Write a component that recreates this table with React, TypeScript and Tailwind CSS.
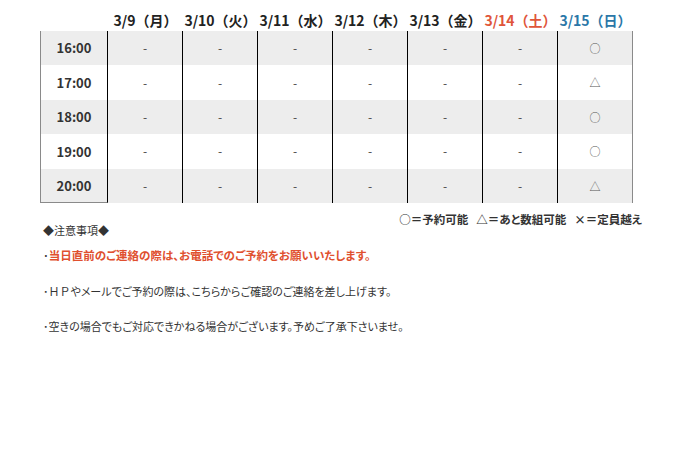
const days = [
  { label: "3/9（月）", color: "text-[#222]" },
  { label: "3/10（火）", color: "text-[#222]" },
  { label: "3/11（水）", color: "text-[#222]" },
  { label: "3/12（木）", color: "text-[#222]" },
  { label: "3/13（金）", color: "text-[#222]" },
  { label: "3/14（土）", color: "text-[#e0553a]" },
  { label: "3/15（日）", color: "text-[#2b77a8]" },
];

const rows = [
  { time: "16:00", last: "○" },
  { time: "17:00", last: "△" },
  { time: "18:00", last: "○" },
  { time: "19:00", last: "○" },
  { time: "20:00", last: "△" },
];

export default function App() {
  return (
    <div className="min-h-[454px] w-[697px] bg-white pt-[9px] font-['Noto_Sans_CJK_JP','Noto_Sans',sans-serif] text-[#333]">
      <div className="ml-[40px] w-[602px]">
        {/* header */}
        <div className="grid grid-cols-[68px_repeat(7,75px)] h-[22px]">
          <div />
          {days.map((d) => (
            <div key={d.label} className={`text-center text-[14px] font-bold leading-[22px] whitespace-nowrap ${d.color}`}>
              {d.label}
            </div>
          ))}
        </div>

        {/* schedule */}
        <div className="grid grid-cols-[68px_repeat(7,75px)]">
          {rows.map((r, i) => {
            const bg = i % 2 === 0 ? "bg-[#ededed]" : "bg-white";
            const isLast = i === rows.length - 1;
            return (
              <div key={r.time} className="contents">
                <div
                  className={`${bg} h-[34.4px] flex items-center justify-center border-l border-l-[#8a8a8a] border-r border-r-black text-[13px] font-bold text-[#333] ${isLast ? "border-b border-b-[#8a8a8a]" : ""}`}
                >
                  {r.time}
                </div>
                {days.map((d, j) => (
                  <div
                    key={d.label}
                    className={`${bg} h-[34.4px] flex items-center justify-center border-r ${j === 6 ? "border-r-[#8a8a8a]" : "border-r-black"} ${j === 6 ? "text-[11px] text-[#555]" : "text-[12px] text-[#444]"}`}
                  >
                    {j === 6 ? r.last : "-"}
                  </div>
                ))}
              </div>
            );
          })}
        </div>

        {/* legend */}
        <div className="mt-[8px] flex justify-end gap-[8px] text-[11.5px] font-bold leading-[16px] text-[#333] [font-feature-settings:'palt']">
          <span>○＝予約可能</span>
          <span>△＝あと数組可能</span>
          <span>×＝定員越え</span>
        </div>

        {/* notes */}
        <div className="text-[11px] leading-[16px] [font-feature-settings:'palt']">
          <p className="-mt-[5px] ml-[3px]">◆注意事項◆</p>
          <p className="mt-[9px] ml-[3px] text-[11.5px] font-bold text-[#e0502f]">
            <span className="text-[#333] font-normal">･</span>当日直前のご連絡の際は、お電話でのご予約をお願いいたします。
          </p>
          <p className="mt-[20px] ml-[3px]">
            ･<span className="[font-feature-settings:normal]">ＨＰ</span>やメールでご予約の際は、こちらからご確認のご連絡を差し上げます。
          </p>
          <p className="mt-[19px] ml-[3px]">･空きの場合でもご対応できかねる場合がございます。予めご了承下さいませ。</p>
        </div>
      </div>
    </div>
  );
}
